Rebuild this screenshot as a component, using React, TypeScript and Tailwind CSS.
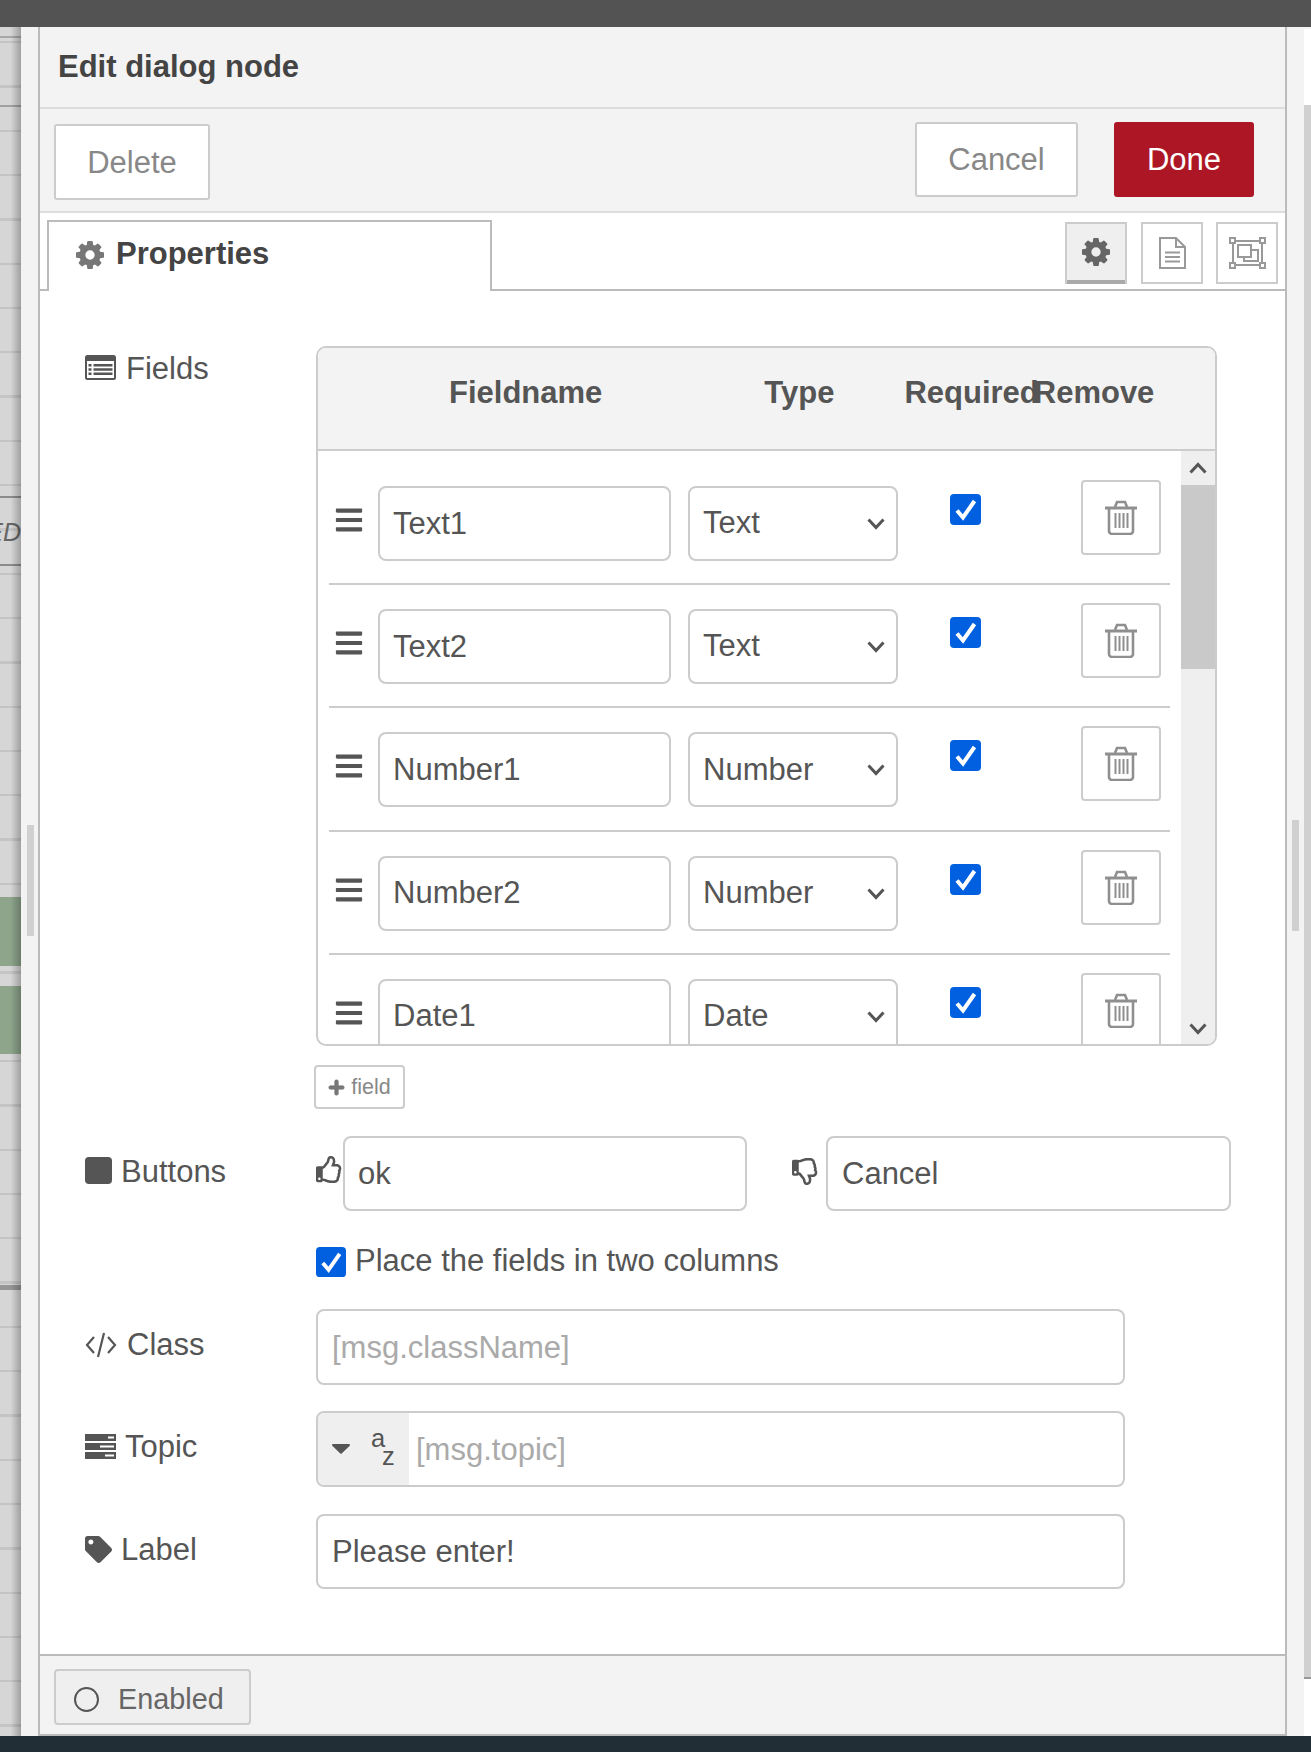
import React from "react";
import { FaBars, FaPlus, FaRegThumbsUp, FaRegThumbsDown, FaTag } from "react-icons/fa";

const box = "border-2 border-[#ccc] rounded-[8px] bg-white";

function Cog({ color }: { color: string }) {
  return (
    <svg width="28" height="28" viewBox="128 128 1536 1536" fill={color} className="shrink-0">
      <path d="M1152 896q0-106-75-181t-181-75-181 75-75 181 75 181 181 75 181-75 75-181zm512-109v222q0 12-8 23t-20 13l-185 28q-19 54-39 91 35 50 107 138 10 12 10 25t-9 23q-27 37-99 108t-94 71q-12 0-26-9l-138-108q-44 23-91 38-16 136-29 186-7 28-36 28h-222q-14 0-24.500-8.500t-11.500-21.500l-28-184q-49-16-90-37l-141 107q-10 9-25 9-14 0-25-11-126-114-165-168-7-10-7-23 0-12 8-23 15-21 51-66.500t54-70.500q-27-50-41-99l-183-27q-13-2-21-12.500t-8-23.500v-222q0-12 8-23t19-13l186-28q14-46 39-92-40-57-107-138-10-12-10-24 0-10 9-23 26-36 98.500-107.500t94.500-71.500q13 0 26 10l138 107q44-23 91-38 16-136 29-186 7-28 36-28h222q14 0 24.500 8.500t11.500 21.500l28 184q49 16 90 37l142-107q9-9 24-9 13 0 25 10 129 119 165 170 7 8 7 22 0 12-8 23-15 21-51 66.500t-54 70.500q26 50 41 98l183 28q13 2 21 12.500t8 23.500z" />
    </svg>
  );
}

function TrashIcon() {
  return (
    <svg width="32" height="35" viewBox="0 0 32 35" fill="none" stroke="#8f8f8f" strokeWidth="2.600">
      <path d="M0 8h32" strokeWidth="3" />
      <path d="M10 7l2-5h8l2 5" />
      <path d="M4 8v23a3 3 0 0 0 3 3h18a3 3 0 0 0 3-3V8" />
      <path d="M10.500 13v15M14.500 13v15M18.500 13v15M22.500 13v15" strokeWidth="2" />
    </svg>
  );
}

function Check({ size }: { size: number }) {
  return (
    <svg width={size} height={size} viewBox="0 0 31 31" className="shrink-0">
      <rect width="31" height="31" rx="4" fill="#0060df" />
      <path d="M7 16.500l6 7L24.500 7" fill="none" stroke="#fff" strokeWidth="4" />
    </svg>
  );
}

function Chevron({ up, color = "#555" }: { up?: boolean; color?: string }) {
  return (
    <svg width="18" height="12" viewBox="0 0 18 12" fill="none" stroke={color} strokeWidth="3">
      <path d={up ? "M1.500 10.500L9 2.500l7.500 8" : "M1.500 1.500L9 9.500l7.500-8"} />
    </svg>
  );
}

function Row({ name, type, last, first }: { name: string; type: string; last?: boolean; first?: boolean }) {
  return (
    <div className={`flex items-start h-[123.200px] pt-[18px] pl-[6px] shrink-0 ${last ? "" : "border-b-2 border-[#ccc]"} ${first ? "mt-[11px]" : ""}`}>
      <FaBars className="w-[28px] h-[30px] mt-[25px] text-[#555] shrink-0" />
      <input
        readOnly
        value={name}
        className={`${box} w-[293px] h-[75px] ml-[15px] mt-[6px] pl-[13px] outline-none text-[#555] shrink-0`}
      />
      <div className="relative ml-[17px] mt-[6px] shrink-0">
        <select
          value={type}
          onChange={() => {}}
          className={`${box} appearance-none w-[210px] h-[75px] pl-[13px] outline-none text-[#555]`}
        >
          <option>{type}</option>
        </select>
        <div className="absolute right-[13px] top-[32px]">
          <Chevron color="#555" />
        </div>
      </div>
      <div className="ml-[52px] mt-[14px] shrink-0">
        <Check size={31} />
      </div>
      <button className="ml-[100px] w-[80px] h-[75px] border-2 border-[#ccc] rounded-[4px] bg-white flex items-center justify-center shrink-0">
        <TrashIcon />
      </button>
    </div>
  );
}

function FieldLabel({ icon, text, gap, top }: { icon: React.ReactNode; text: string; gap: string; top: string }) {
  return (
    <div className={`w-[231px] h-[34px] flex items-center shrink-0 text-[#555] ${gap} ${top}`}>
      {icon}
      <span>{text}</span>
    </div>
  );
}

export default function App() {
  return (
    <div className="w-[1311px] h-[1752px] flex flex-col overflow-hidden bg-[#f3f3f3] text-[31px] font-['Liberation_Sans',Arial,sans-serif]">
      <div className="h-[27px] bg-[#535353] shrink-0" />
      <div className="flex flex-1 min-h-0">
        {/* canvas behind the tray, left */}
        <div className="relative w-[21px] shrink-0 overflow-hidden bg-[repeating-linear-gradient(180deg,#d6d6d6_-28px,#d6d6d6_14px,#c4c4c4_14px,#c4c4c4_16.300px)]">
          <div className="absolute left-0 right-0 top-[9px] h-[2px] bg-[#a8a8a8]" />
          <div className="absolute left-0 right-0 top-[78px] h-[2px] bg-[#a0a0a0]" />
          <div className="absolute left-0 right-0 top-[469px] h-[2px] bg-[#8c8c8c]" />
          <div className="absolute left-0 right-0 top-[537px] h-[2px] bg-[#8c8c8c]" />
          <div className="absolute right-0 top-[485px] text-[25px] italic leading-[40px] text-[#666] whitespace-nowrap">ED</div>
          <div className="absolute left-0 right-0 top-[870px] h-[69px] bg-[#8ea58c]" />
          <div className="absolute left-0 right-0 top-[959px] h-[68px] bg-[#8ea58c]" />
          <div className="absolute left-0 right-0 top-[1258px] h-[5px] bg-[#959595]" />
          <div className="absolute inset-0 bg-gradient-to-r from-transparent via-transparent to-black/25" />
        </div>
        {/* tray edge */}
        <div className="relative w-[17px] shrink-0 bg-[#f3f3f3]">
          <div className="absolute left-[6px] top-[798px] w-[7px] h-[111px] bg-[#d0d0d0]" />
        </div>

        {/* dialog */}
        <div className="w-[1249px] shrink-0 border-x-2 border-[#bbb] flex flex-col bg-white">
          <div className="h-[82px] shrink-0 bg-[#f3f3f3] border-b-2 border-[#ddd] flex items-center pl-[18px] pt-[1px] font-bold text-[#444]">
            Edit dialog node
          </div>
          <div className="h-[104px] shrink-0 bg-[#f3f3f3] border-b-2 border-[#ddd] flex items-start pl-[14px] pr-[31px]">
            <button className="w-[156px] h-[76px] mt-[15px] pt-[3px] border-2 border-[#ccc] rounded-[3px] bg-white text-[#888]">Delete</button>
            <button className="w-[163px] h-[75px] mt-[13px] ml-auto pt-[2px] border-2 border-[#ccc] rounded-[3px] bg-white text-[#888]">Cancel</button>
            <button className="w-[140px] h-[75px] mt-[13px] ml-[36px] pt-[2px] rounded-[3px] bg-[#ad1625] text-white">Done</button>
          </div>

          {/* tab strip */}
          <div className="h-[78px] shrink-0 border-b-2 border-[#bbb] flex items-start pl-[7px] pr-[7px]">
            <div className="mt-[7px] w-[445px] h-[71px] border-2 border-b-0 border-[#bbb] bg-white flex items-center pl-[27px] pb-[4px] gap-[12px] font-bold text-[#444]">
              <Cog color="#777" />
              <span>Properties</span>
            </div>
            <div className="ml-auto mt-[9px] w-[62px] h-[62px] border-2 border-b-0 border-[#ccc] bg-[#efefef] flex flex-col">
              <div className="flex-1 flex items-center justify-center">
                <Cog color="#666" />
              </div>
              <div className="h-[4px] bg-[#aaa]" />
            </div>
            <div className="ml-[14px] mt-[9px] w-[62px] h-[62px] border-2 border-[#ccc] bg-white flex items-center justify-center">
              <svg width="27" height="32" viewBox="0 0 27 32" fill="none" stroke="#999" strokeWidth="2">
                <path d="M1 1h16l9 9v21H1z" />
                <path d="M17 1v9h9" />
                <path d="M6 15.500h15M6 20h15M6 24.500h15" />
              </svg>
            </div>
            <div className="ml-[13px] mt-[9px] w-[62px] h-[62px] border-2 border-[#ccc] bg-white flex items-center justify-center">
              <svg width="37" height="32" viewBox="0 0 37 32" fill="none" stroke="#999" strokeWidth="2">
                <path d="M4 4v24M33 4v24M4 4h29M4 28h29" />
                <rect x="1" y="1" width="5" height="5" fill="#fff" />
                <rect x="31" y="1" width="5" height="5" fill="#fff" />
                <rect x="1" y="26" width="5" height="5" fill="#fff" />
                <rect x="31" y="26" width="5" height="5" fill="#fff" />
                <rect x="9" y="8" width="13" height="12" />
                <path d="M22 13h7v11H15v-4" />
              </svg>
            </div>
          </div>

          {/* form */}
          <div className="flex-1 min-h-0 flex flex-col pl-[45px] pt-[55px]">
            <div className="flex items-start">
              <FieldLabel
                gap="gap-[10px]"
                top="mt-[6px]"
                text="Fields"
                icon={
                  <svg width="31" height="25" viewBox="0 0 31 25" className="-mt-[4px]">
                    <rect width="31" height="25" rx="2.500" fill="#555" />
                    <rect x="2" y="6" width="27" height="17" fill="#fff" />
                    <path d="M3.500 9h3v2.500h-3zM3.500 13.300h3v2.500h-3zM3.500 17.600h3v2.500h-3zM8.500 9h19v2.500h-19zM8.500 13.300h19v2.500h-19zM8.500 17.600h19v2.500h-19z" fill="#555" />
                  </svg>
                }
              />
              <div className="flex flex-col">
                <div className="w-[901px] h-[700px] border-2 border-[#ccc] rounded-[10px] overflow-hidden flex flex-col">
                  <div className="h-[103px] shrink-0 bg-[#f3f3f3] border-b-2 border-[#ccc] flex items-center pb-[10px] pl-[131px] font-bold text-[#555] whitespace-nowrap">
                    <span>Fieldname</span>
                    <span className="ml-[162px]">Type</span>
                    <span className="ml-[70px]">Required</span>
                    <span className="-ml-[5px]">Remove</span>
                  </div>
                  <div className="flex-1 min-h-0 flex">
                    <div className="flex-1 min-w-0 flex flex-col pl-[11px] pr-[11px] overflow-hidden">
                      <Row first name="Text1" type="Text" />
                      <Row name="Text2" type="Text" />
                      <Row name="Number1" type="Number" />
                      <Row name="Number2" type="Number" />
                      <Row last name="Date1" type="Date" />
                    </div>
                    <div className="w-[34px] shrink-0 bg-[#efefef] flex flex-col">
                      <div className="h-[34px] flex items-center justify-center">
                        <Chevron up />
                      </div>
                      <div className="h-[184px] bg-[#c9c9c9]" />
                      <div className="flex-1 flex items-end justify-center pb-[9px]">
                        <Chevron />
                      </div>
                    </div>
                  </div>
                </div>
                <button className="self-start -ml-[2px] mt-[19px] w-[91px] h-[44px] border-2 border-[#ccc] rounded-[4px] bg-white flex items-center justify-center gap-[6px] text-[21.500px] text-[#888]">
                  <FaPlus className="w-[17px] h-[17px] text-[#777] stroke-[30]" />
                  <span>field</span>
                </button>
              </div>
            </div>

            <div className="flex items-start mt-[27px]">
              <FieldLabel
                gap="gap-[9px]"
                top="mt-[19px]"
                text="Buttons"
                icon={<div className="w-[27px] h-[27px] -mt-[4px] rounded-[4px] bg-[#555]" />}
              />
              <FaRegThumbsUp className="w-[27px] h-[29px] mt-[19px] text-[#555] shrink-0" />
              <input readOnly value="ok" className={`${box} w-[404px] h-[75px] pl-[13px] outline-none text-[#555]`} />
              <FaRegThumbsDown className="w-[27px] h-[29px] mt-[21px] ml-[45px] text-[#555] shrink-0" />
              <input readOnly value="Cancel" className={`${box} w-[405px] h-[75px] ml-[7px] pl-[14px] outline-none text-[#555]`} />
            </div>

            <div className="flex items-center mt-[36px] pl-[231px] gap-[9px] h-[30px] text-[#555]">
              <Check size={30} />
              <span className="-mt-[2px]">Place the fields in two columns</span>
            </div>

            <div className="flex items-start mt-[32px]">
              <FieldLabel
                gap="gap-[10px]"
                top="mt-[19px]"
                text="Class"
                icon={
                  <svg width="32" height="26" viewBox="0 0 32 26" fill="none" stroke="#555" strokeWidth="2.200">
                    <path d="M9 5L2 13l7 8M23 5l7 8-7 8M19 1l-6 24" />
                  </svg>
                }
              />
              <input readOnly placeholder="[msg.className]" className={`${box} w-[809px] h-[76px] pl-[14px] pt-[2px] outline-none text-[#555] placeholder:text-[#aaa]`} />
            </div>

            <div className="flex items-start mt-[26px]">
              <FieldLabel
                gap="gap-[9px]"
                top="mt-[19px]"
                text="Topic"
                icon={
                  <svg width="31" height="25" viewBox="0 0 31 25" fill="#555" className="-mt-[2px]">
                    <path d="M0 0h31v7H0zM0 9h31v7H0zM0 18h31v7H0z" />
                    <path d="M23 2.500h6v2h-6zM15 11.500h14v2H15zM20 20.500h9v2h-9z" fill="#fff" />
                  </svg>
                }
              />
              <div className={`${box} w-[809px] h-[76px] flex overflow-hidden`}>
                <div className="relative w-[91px] shrink-0 bg-[#efefef] flex items-center pl-[14px] text-[25.500px] text-[#555]">
                  <svg width="18" height="10" viewBox="0 0 18 10" fill="#555">
                    <path d="M1 0h16a1 1 0 0 1 .7 1.700L9.700 9.500a1 1 0 0 1-1.400 0L.3 1.700A1 1 0 0 1 1 0z" />
                  </svg>
                  <span className="absolute left-[53px] top-[10px] leading-[30px]">a</span>
                  <span className="absolute left-[64px] top-[28px] leading-[30px]">z</span>
                </div>
                <input readOnly placeholder="[msg.topic]" className="flex-1 min-w-0 pl-[7px] pt-[2px] outline-none text-[#555] placeholder:text-[#aaa]" />
              </div>
            </div>

            <div className="flex items-start mt-[27px]">
              <FieldLabel
                gap="gap-[9px]"
                top="mt-[19px]"
                text="Label"
                icon={<FaTag className="w-[27px] h-[27px] -mt-[2px] text-[#555]" />}
              />
              <input readOnly value="Please enter!" className={`${box} w-[809px] h-[75px] pl-[14px] outline-none text-[#555]`} />
            </div>
          </div>

          {/* footer */}
          <div className="h-[82px] shrink-0 bg-[#f3f3f3] border-t-2 border-t-[#bbb] border-b-2 border-b-[#bbb] pl-[14px] pt-[13px]">
            <button className="w-[197px] h-[56px] border-2 border-[#ccc] rounded-[4px] bg-[#efefef] flex items-center pl-[18px] pt-[4px] gap-[19px] text-[28.800px] text-[#666]">
              <span className="w-[25px] h-[25px] rounded-full border-2 border-[#555] shrink-0" />
              <span className="pt-[2px]">Enabled</span>
            </button>
          </div>
        </div>

        {/* tray edge, right */}
        <div className="relative w-[17px] shrink-0 bg-[#f3f3f3]">
          <div className="absolute left-[5px] top-[793px] w-[7px] h-[111px] bg-[#d0d0d0]" />
        </div>
        <div className="w-[7px] shrink-0 bg-[#d0d0d0] flex flex-col">
          <div className="h-[2px] bg-[#f3f3f3]" />
          <div className="h-[76px] bg-white shrink-0" />
          <div className="flex-1" />
          <div className="h-[2px] bg-[#999]" />
          <div className="h-[57px] bg-white shrink-0" />
        </div>
      </div>
      <div className="h-[16px] shrink-0 bg-[#222e35]" />
    </div>
  );
}
